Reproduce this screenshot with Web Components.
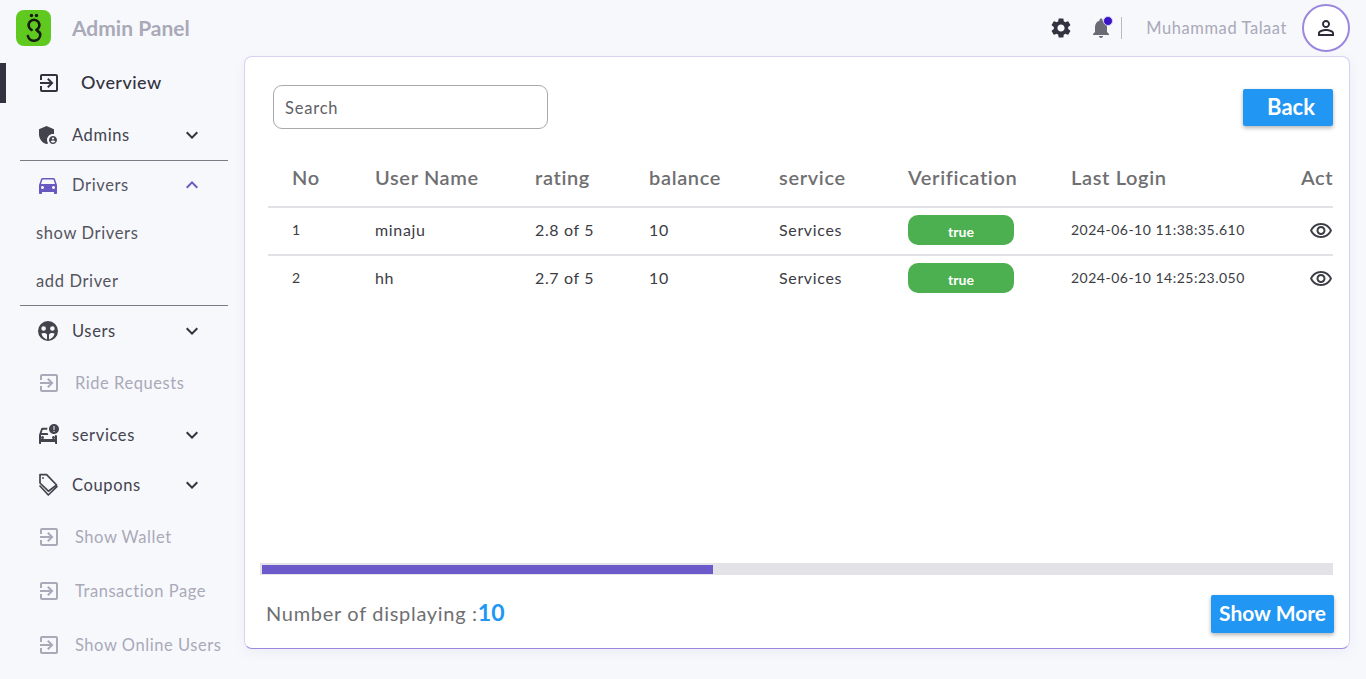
<!DOCTYPE html>
<html lang="en">
<head>
<meta charset="utf-8">
<title>Admin Panel</title>
<style>
  html, body { margin: 0; height: 100%; background: #f7f8fc; }
  body { font-family: Lato, "Open Sans", sans-serif; overflow: hidden; }
</style>
</head>
<body>
<admin-app></admin-app>

<script>
// Material icon paths used across the page
const ICONS = {
  exit: 'M10.09 15.59L11.5 17l5-5-5-5-1.41 1.41L12.67 11H3v2h9.67l-2.58 2.59zM19 3H5c-1.11 0-2 .9-2 2v4h2V5h14v14H5v-4H3v4c0 1.1.89 2 2 2h14c1.1 0 2-.9 2-2V5c0-1.1-.9-2-2-2z',
  admin: 'M17,11c0.34,0,0.67,0.04,1,0.09V6.27L10.5,3L3,6.27v4.91c0,4.54,3.2,8.79,7.5,9.82c0.55-0.13,1.08-0.32,1.6-0.55C11.41,19.47,11,18.28,11,17C11,13.69,13.69,11,17,11z M17,13c-2.21,0-4,1.79-4,4c0,2.21,1.79,4,4,4s4-1.79,4-4C21,14.79,19.21,13,17,13z M17,14.38c0.62,0,1.12,0.51,1.12,1.12s-0.51,1.12-1.12,1.12s-1.12-0.51-1.12-1.12S16.38,14.38,17,14.38z M17,19.75c-0.93,0-1.74-0.46-2.24-1.17c0.05-0.72,1.51-1.08,2.24-1.08s2.19,0.36,2.24,1.08C18.74,19.29,17.93,19.75,17,19.75z',
  car: 'M18.92 6.01C18.72 5.42 18.16 5 17.5 5h-11c-.66 0-1.21.42-1.42 1.01L3 12v8c0 .55.45 1 1 1h1c.55 0 1-.45 1-1v-1h12v1c0 .55.45 1 1 1h1c.55 0 1-.45 1-1v-8l-2.08-5.99zM6.5 16c-.83 0-1.5-.67-1.5-1.5S5.67 13 6.5 13s1.5.67 1.5 1.5S7.33 16 6.5 16zm11 0c-.83 0-1.5-.67-1.5-1.5s.67-1.5 1.5-1.5 1.5.67 1.5 1.5-.67 1.5-1.5 1.5zM5 11l1.5-4.5h11L19 11H5z',
  users: 'M12 2a10 10 0 1 0 0 20a10 10 0 0 0 0-20zM7.6 7.2a2.3 2.3 0 1 1 0 4.6a2.3 2.3 0 0 1 0-4.6zM16.4 7.2a2.3 2.3 0 1 1 0 4.6a2.3 2.3 0 0 1 0-4.6zM5.4 14.6c2-1 4.2-.6 5.6.9v5.1a8.4 8.4 0 0 1-5.6-6zM18.6 14.6c-2-1-4.2-.6-5.6.9v5.1a8.4 8.4 0 0 0 5.6-6z',
  crash: 'M18 1c-2.76 0-5 2.24-5 5s2.24 5 5 5 5-2.24 5-5-2.24-5-5-5zm.5 8h-1V8h1v1zm0-2h-1V3h1v4zM5 19h14v1c0 .55.45 1 1 1h1v-8.6c-.7-.1-1.3-.2-2-.5v4.1H5v-4h7.3c-.3-.6-.6-1.3-.7-2H5.6l1.1-3.3h4.5c0-.7.1-1.4.3-2H6.5c-.66 0-1.21.42-1.42 1.01L3 12v8c0 .55.45 1 1 1h1v-2zM6.5 13A1.5 1.5 0 1 1 6.5 16A1.5 1.5 0 0 1 6.5 13zM17.5 13A1.5 1.5 0 1 1 17.5 16A1.5 1.5 0 0 1 17.5 13z',
  less: 'M12 8l-6 6 1.41 1.41L12 10.83l4.59 4.58L18 14z',
  more: 'M16.59 8.59L12 13.17 7.41 8.59 6 10l6 6 6-6z',
  gear: 'M19.14 12.94c.04-.3.06-.61.06-.94 0-.32-.02-.64-.07-.94l2.03-1.58c.18-.14.23-.41.12-.61l-1.92-3.32c-.12-.22-.37-.29-.59-.22l-2.39.96c-.5-.38-1.03-.7-1.62-.94l-.36-2.54c-.04-.24-.24-.41-.48-.41h-3.84c-.24 0-.43.17-.47.41l-.36 2.54c-.59.24-1.13.57-1.62.94l-2.39-.96c-.22-.08-.47 0-.59.22L2.74 8.87c-.12.21-.08.47.12.61l2.03 1.58c-.05.3-.09.63-.09.94s.02.64.07.94l-2.03 1.58c-.18.14-.23.41-.12.61l1.92 3.32c.12.22.37.29.59.22l2.39-.96c.5.38 1.03.7 1.62.94l.36 2.54c.05.24.24.41.48.41h3.84c.24 0 .44-.17.47-.41l.36-2.54c.59-.24 1.13-.56 1.62-.94l2.39.96c.22.08.47 0 .59-.22l1.92-3.32c.12-.22.07-.47-.12-.61l-2.01-1.58zM12 15.6c-1.98 0-3.6-1.62-3.6-3.6s1.62-3.6 3.6-3.6 3.6 1.62 3.6 3.6-1.62 3.6-3.6 3.6z',
  bell: 'M12 22c1.1 0 2-.9 2-2h-4c0 1.1.89 2 2 2zm6-6v-5c0-3.07-1.64-5.64-4.5-6.32V4c0-.83-.67-1.5-1.5-1.5s-1.5.67-1.5 1.5v.68C7.63 5.36 6 7.92 6 11v5l-2 2v1h16v-1l-2-2z',
  person: 'M12 5.9c1.16 0 2.1.94 2.1 2.1s-.94 2.1-2.1 2.1S9.9 9.16 9.9 8s.94-2.1 2.1-2.1m0 9c2.97 0 6.1 1.46 6.1 2.1v1.1H5.9V17c0-.64 3.13-2.1 6.1-2.1M12 4C9.79 4 8 5.79 8 8s1.79 4 4 4 4-1.79 4-4-1.79-4-4-4zm0 9c-2.67 0-8 1.34-8 4v3h16v-3c0-2.66-5.33-4-8-4z',
  eye: 'M12 6c3.79 0 7.17 2.13 8.82 5.5C19.17 14.87 15.79 17 12 17s-7.17-2.13-8.82-5.5C4.83 8.13 8.21 6 12 6m0-2C7 4 2.73 7.11 1 11.5 2.73 15.89 7 19 12 19s9.27-3.11 11-7.5C21.27 7.11 17 4 12 4zm0 5c1.38 0 2.5 1.12 2.5 2.5S13.38 14 12 14s-2.5-1.12-2.5-2.5S10.62 9 12 9m0-2c-2.48 0-4.5 2.02-4.5 4.5S9.52 16 12 16s4.5-2.02 4.5-4.5S14.48 7 12 7z'
};

const icon = (name, size = 24) => {
  // the coupon icon is stroked, all the others are filled
  if (name === 'tag') {
    return `<svg width="${size}" height="${size}" viewBox="0 0 24 24" fill="none" stroke="currentColor" stroke-width="1.7" stroke-linejoin="round" stroke-linecap="round" aria-hidden="true"><path d="M4 1.6h6.6l10 10.4-8.2 6.2L4 10z"/><path d="M4 13l8.3 9 8.6-8.4"/><circle cx="7" cy="5" r=".9" fill="currentColor" stroke="none"/></svg>`;
  }
  return `<svg width="${size}" height="${size}" viewBox="0 0 24 24" fill="currentColor" fill-rule="evenodd" aria-hidden="true"><path d="${ICONS[name]}"/></svg>`;
};

// Top bar: logo, title, actions
class AdminHeader extends HTMLElement {
  connectedCallback() {
    this.attachShadow({ mode: 'open' }).innerHTML = `
      <style>
        :host { display: flex; align-items: center; height: 56px; padding: 0 16px; box-sizing: border-box; }
        .logo { width: 35px; height: 36px; border-radius: 8px; background: #5fc91f; display: flex; align-items: center; justify-content: center; }
        .title { margin: -2px 0 0 21px; font-size: 21px; font-weight: 700; color: #a9a9b8; }
        .actions { margin-left: auto; display: flex; align-items: center; }
        .gear { color: #33333f; display: flex; }
        .bell { color: #6b6b76; display: flex; position: relative; margin-left: 16px; }
        .bell i { position: absolute; top: 0; right: 0; width: 8px; height: 8px; border-radius: 50%; background: #3a14c6; border: 1px solid #d9d2f5; }
        .sep { width: 1px; height: 22px; background: #b9b9c4; margin-left: 8px; }
        .name { margin: 0 0 0 24px; padding-bottom: 1px; font-size: 16.5px; color: #a9a9b8; letter-spacing: .56px; }
        .avatar { margin-left: 15px; width: 48px; height: 48px; box-sizing: border-box; border-radius: 50%; border: 2px solid #9b87dd; background: #fff; color: #2b2b38; display: flex; align-items: center; justify-content: center; }
      </style>
      <div class="logo">
        <svg width="24" height="30" viewBox="0 0 24 30" fill="none" stroke="#151a14" stroke-width="2.6" stroke-linecap="round" aria-hidden="true">
          <circle cx="9.5" cy="2.5" r="1.7" fill="#151a14" stroke="none"/><circle cx="14.5" cy="2.5" r="1.7" fill="#151a14" stroke="none"/>
          <path d="M9.6 17a5.4 5.4 0 1 1 4.8 0"/>
          <path d="M15.5 18c2 1 2.8 2.4 2.8 3.8a6.3 6.3 0 0 1-12.4 1.2"/>
        </svg>
      </div>
      <span class="title">Admin Panel</span>
      <div class="actions">
        <span class="gear">${icon('gear')}</span>
        <span class="bell">${icon('bell')}<i></i></span>
        <span class="sep"></span>
        <span class="name">Muhammad Talaat</span>
        <span class="avatar">${icon('person')}</span>
      </div>`;
  }
}

// Plain sidebar link, the "active" one gets the dark marker
class NavLink extends HTMLElement {
  connectedCallback() {
    const active = this.hasAttribute('active');
    this.attachShadow({ mode: 'open' }).innerHTML = `
      <style>
        :host { display: flex; align-items: center; height: 54px; position: relative; padding-left: 37px; color: #a9a9b8; font-size: 16.5px; letter-spacing: .55px; }
        :host([active]) { color: #33333f; font-size: 18px; font-weight: 500; letter-spacing: .45px; }
        .mark { position: absolute; left: 0; top: 7px; width: 6px; height: 40px; background: #33333f; }
        svg { flex: none; }
        .label { margin: 0 0 0 14px; }
        :host([active]) .label { margin: -2px 0 0 20px; }
      </style>
      ${active ? '<span class="mark"></span>' : ''}
      ${icon('exit')}
      <span class="label"><slot></slot></span>`;
  }
}

// Expandable sidebar row with a chevron
class NavGroup extends HTMLElement {
  connectedCallback() {
    const open = this.hasAttribute('open');
    this.attachShadow({ mode: 'open' }).innerHTML = `
      <style>
        :host { display: flex; align-items: center; height: 50px; padding: 0 40px 0 36px; color: #43434e; font-size: 16.5px; letter-spacing: .63px; }
        :host([open]) { color: #54545f; }
        .ic { display: flex; flex: none; color: #43434e; }
        :host([open]) .ic, :host([open]) .chev { color: #6a58c2; }
        .label { margin: 0 0 0 12px; flex: 1; }
        .chev { display: flex; color: #33333f; }
      </style>
      <span class="ic">${icon(this.getAttribute('icon'))}</span>
      <span class="label"><slot></slot></span>
      <span class="chev">${icon(open ? 'less' : 'more')}</span>`;
  }
}

class NavSub extends HTMLElement {
  connectedCallback() {
    this.attachShadow({ mode: 'open' }).innerHTML = `
      <style>
        :host { display: flex; align-items: center; height: 48px; padding: 0 0 0 36px; box-sizing: border-box; color: #55555f; font-size: 16.5px; letter-spacing: .63px; }
      </style>
      <slot></slot>`;
  }
}

class SideNav extends HTMLElement {
  connectedCallback() {
    this.attachShadow({ mode: 'open' }).innerHTML = `
      <style>
        :host { display: block; width: 244px; flex: none; }
        .rule { height: 1px; margin: 0 16px 0 20px; background: #7d7a85; }
        .rule.tuck { margin-bottom: -1px; }
      </style>
      <nav-link active>Overview</nav-link>
      <nav-group icon="admin">Admins</nav-group>
      <div class="rule tuck"></div>
      <nav-group icon="car" open>Drivers</nav-group>
      <nav-sub style="margin-top:-1px">show Drivers</nav-sub>
      <nav-sub>add Driver</nav-sub>
      <div class="rule"></div>
      <nav-group icon="users">Users</nav-group>
      <nav-link>Ride Requests</nav-link>
      <nav-group icon="crash">services</nav-group>
      <nav-group icon="tag">Coupons</nav-group>
      <nav-link>Show Wallet</nav-link>
      <nav-link>Transaction Page</nav-link>
      <nav-link>Show Online Users</nav-link>`;
  }
}

class StatusPill extends HTMLElement {
  connectedCallback() {
    this.attachShadow({ mode: 'open' }).innerHTML = `
      <style>
        :host { display: flex; align-items: center; justify-content: center; width: 106px; height: 30px; padding-top: 2px; box-sizing: border-box; border-radius: 10px; background: #4caf50; color: #fff; font-size: 14px; font-weight: 700; letter-spacing: .1px; }
      </style>
      <slot></slot>`;
  }
}

class BlueButton extends HTMLElement {
  connectedCallback() {
    this.attachShadow({ mode: 'open' }).innerHTML = `
      <style>
        :host { display: flex; align-items: center; justify-content: center; box-sizing: border-box; background: #2196f3; color: #fff; border-radius: 2px; font-weight: 700; box-shadow: 0 2px 4px rgba(0,0,0,.3); }
      </style>
      <slot></slot>`;
  }
}

// Users table, cut at the right edge of the card like the original
class UsersTable extends HTMLElement {
  connectedCallback() {
    const cols = ['No', 'User Name', 'rating', 'balance', 'service', 'Verification', 'Last Login', 'Act'];
    const rows = [
      ['1', 'minaju', '2.8 of 5', '10', 'Services', 'true', '2024-06-10 11:38:35.610'],
      ['2', 'hh', '2.7 of 5', '10', 'Services', 'true', '2024-06-10 14:25:23.050']
    ];
    this.attachShadow({ mode: 'open' }).innerHTML = `
      <style>
        :host { display: block; margin: 0 16px 0 23px; overflow: hidden; flex: 1; }
        .row { display: grid; grid-template-columns: 83px 160px 114px 130px 129px 163px 230px 56px; box-sizing: border-box; align-items: center; }
        .head { height: 59px; color: #6f6f72; font-size: 20px; font-weight: 600; letter-spacing: .65px; }
        .body { height: 46px; padding-bottom: 2px; font-size: 16px; color: #3c3c44; letter-spacing: .65px; }
        .row > span { padding-left: 24px; white-space: nowrap; }
        .body > span:not(.cell) { margin-top: -2px; }
        .line { height: 2px; background: #e2e1e6; }
        .no { font-size: 14px; }
        .date { font-size: 14px; letter-spacing: .5px; }
        .eye { color: #3c3c44; display: flex; margin: 1px 0 0 32px; padding: 0 !important; }
      </style>
      <div class="row head">${cols.map(c => `<span>${c}</span>`).join('')}</div>
      <div class="line"></div>
      ${rows.map((r, i) => `
        <div class="row body">
          <span class="no">${r[0]}</span><span>${r[1]}</span><span>${r[2]}</span><span>${r[3]}</span><span>${r[4]}</span>
          <span class="cell"><status-pill>${r[5]}</status-pill></span>
          <span class="date">${r[6]}</span>
          <span class="cell eye">${icon('eye')}</span>
        </div>
        ${i === 0 ? '<div class="line"></div>' : ''}`).join('')}`;
  }
}

class ScrollTrack extends HTMLElement {
  connectedCallback() {
    this.attachShadow({ mode: 'open' }).innerHTML = `
      <style>
        :host { display: block; height: 12px; margin: 0 16px 0 15px; background: #e3e2e6; padding: 2px 0 1px 2px; box-sizing: border-box; }
        div { width: 451px; height: 100%; background: #6c59ca; }
      </style>
      <div></div>`;
  }
}

class DataCard extends HTMLElement {
  connectedCallback() {
    this.attachShadow({ mode: 'open' }).innerHTML = `
      <style>
        :host { display: flex; flex-direction: column; flex: none; box-sizing: border-box; width: 1106px; height: 593px; background: #fff; border: 1px solid #d8d1f5; border-bottom-color: #9d86e0; border-radius: 8px; box-shadow: 0 4px 12px rgba(90,90,130,.06); }
        .top { display: flex; align-items: center; justify-content: space-between; padding: 10px 16px 0 28px; height: 90px; box-sizing: border-box; }
        input { width: 275px; height: 44px; box-sizing: border-box; border: 1px solid #a9a8ad; border-left-width: 1.5px; border-radius: 9px; padding: 2px 11px 0; font: inherit; font-size: 16.5px; letter-spacing: .8px; outline: none; background: #fff; }
        input::placeholder { color: #5f5f66; opacity: 1; }
        .back { width: 90px; height: 37px; padding: 0 0 2px 6px; font-size: 22px; }
        .foot { display: flex; align-items: center; justify-content: space-between; padding: 5px 15px 0 21px; height: 73px; box-sizing: border-box; }
        .count { margin-top: -5px; color: #6f6f72; font-size: 20px; letter-spacing: .7px; }
        .count b { color: #2196f3; font-size: 23px; letter-spacing: 0; }
        .more { width: 123px; height: 38px; padding-bottom: 3px; font-size: 21px; }
      </style>
      <div class="top">
        <input placeholder="Search" aria-label="Search">
        <blue-button class="back">Back</blue-button>
      </div>
      <users-table></users-table>
      <scroll-track></scroll-track>
      <div class="foot">
        <span class="count">Number of displaying :<b>10</b></span>
        <blue-button class="more">Show More</blue-button>
      </div>`;
  }
}

class AdminApp extends HTMLElement {
  connectedCallback() {
    this.attachShadow({ mode: 'open' }).innerHTML = `
      <style>
        :host { display: block; width: 1366px; height: 679px; overflow: hidden; }
        .main { display: flex; align-items: flex-start; }
      </style>
      <admin-header></admin-header>
      <div class="main">
        <side-nav></side-nav>
        <data-card></data-card>
      </div>`;
  }
}

customElements.define('admin-header', AdminHeader);
customElements.define('nav-link', NavLink);
customElements.define('nav-group', NavGroup);
customElements.define('nav-sub', NavSub);
customElements.define('side-nav', SideNav);
customElements.define('status-pill', StatusPill);
customElements.define('blue-button', BlueButton);
customElements.define('users-table', UsersTable);
customElements.define('scroll-track', ScrollTrack);
customElements.define('data-card', DataCard);
customElements.define('admin-app', AdminApp);
</script>
</body>
</html>
